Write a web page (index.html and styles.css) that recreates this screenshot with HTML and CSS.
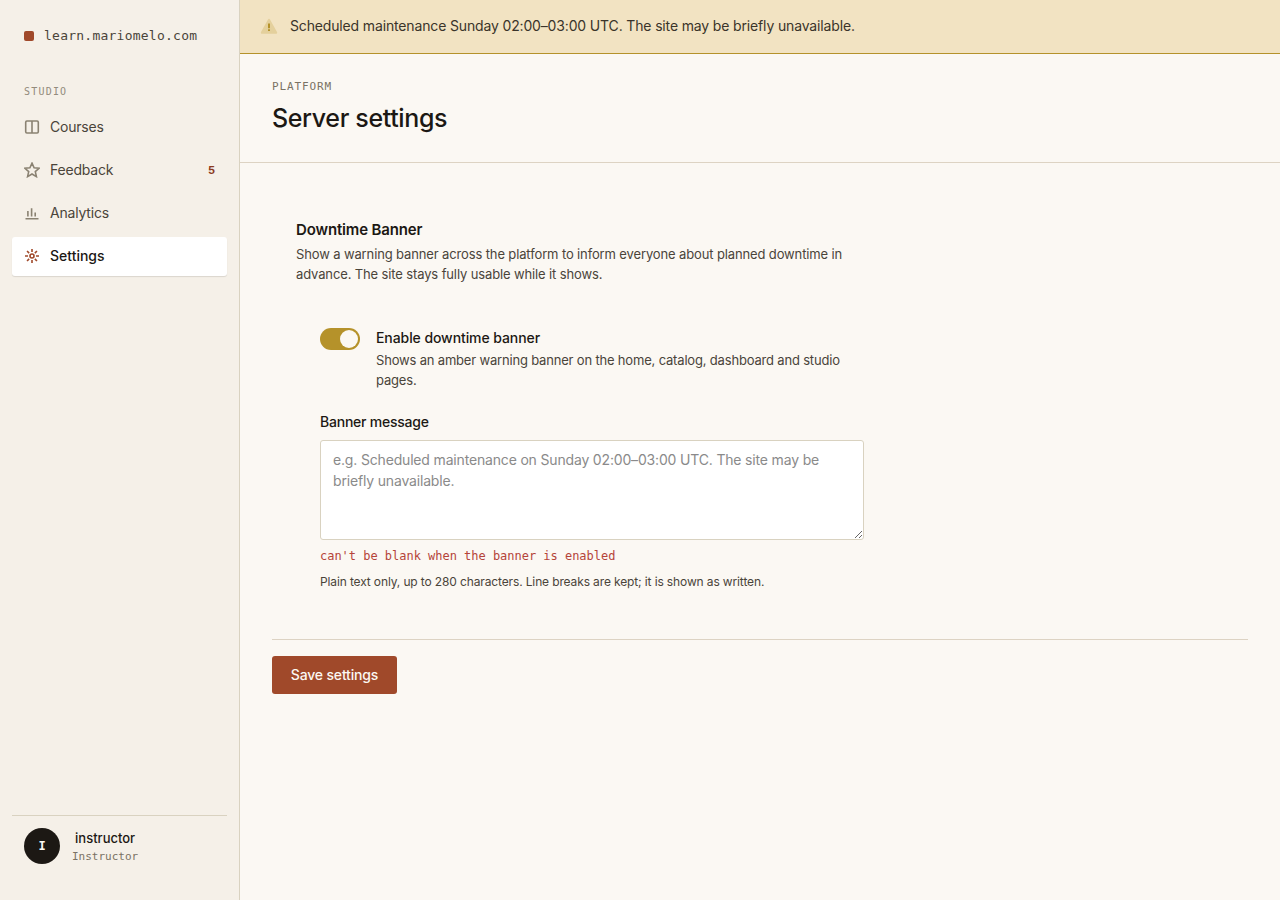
FILE: index.html
```
<!DOCTYPE html>
<html lang="en">
<head>
    <meta charset="UTF-8">
    <meta name="viewport" content="width=device-width, initial-scale=1.0">
    <title>Server settings</title>
    <link rel="stylesheet" href="styles.css">
</head>
<body>
    <div class="layout">
        <!-- Sidebar -->
        <aside class="sidebar">
            <a class="brand" href="#"><span class="brand-mark"></span><span class="brand-name">learn.mariomelo.com</span></a>

            <div class="nav-title">STUDIO</div>
            <nav class="nav">
                <a class="nav-item" href="#">
                    <svg class="icon" viewBox="0 0 16 16"><rect x="1.7" y="2" width="12.6" height="12" rx="1.2"/><path d="M8 2v12"/></svg>
                    <span class="nav-label">Courses</span>
                </a>
                <a class="nav-item" href="#">
                    <svg class="icon" viewBox="0 0 16 16"><path d="M8 1.2l2.1 4.6 5 .5-3.8 3.3 1.1 5L8 12l-4.4 2.6 1.1-5L.9 6.3l5-.5z"/></svg>
                    <span class="nav-label">Feedback</span>
                    <span class="count">5</span>
                </a>
                <a class="nav-item" href="#">
                    <svg class="icon" viewBox="0 0 16 16"><path d="M1.5 13.7h13M3.9 11.5V6M7.6 11.5V3.2M11.2 11.5V7.4"/></svg>
                    <span class="nav-label">Analytics</span>
                </a>
                <a class="nav-item active" href="#">
                    <svg class="icon" viewBox="0 0 16 16"><circle cx="8" cy="8" r="2"/><path d="M8 1v3M8 12v3M1 8h3M12 8h3M3.05 3.05l2.1 2.1M10.85 10.85l2.1 2.1M3.05 12.95l2.1-2.1M10.85 5.15l2.1-2.1"/></svg>
                    <span class="nav-label">Settings</span>
                </a>
            </nav>

            <div class="user">
                <div class="avatar">I</div>
                <div class="user-info">
                    <div class="user-name">instructor</div>
                    <div class="user-role">Instructor</div>
                </div>
            </div>
        </aside>

        <!-- Page -->
        <main class="main">
            <div class="banner">
                <svg class="banner-icon" viewBox="0 0 18 18"><path class="triangle" d="M8 1.6a1.2 1.2 0 0 1 2 0l7 12.4a1.1 1.1 0 0 1-1 1.7H2a1.1 1.1 0 0 1-1-1.7z"/><path class="mark" d="M8 5.4h2v4.8H8zM8 11.2h2V13H8z"/></svg>
                <span class="banner-text">Scheduled maintenance Sunday 02:00–03:00 UTC. The site may be briefly unavailable.</span>
            </div>

            <header class="page-header">
                <div class="eyebrow">PLATFORM</div>
                <h1>Server settings</h1>
            </header>

            <form class="form">
                <section class="section">
                    <h2>Downtime Banner</h2>
                    <p class="section-text">Show a warning banner across the platform to inform everyone about planned downtime in<br>advance. The site stays fully usable while it shows.</p>

                    <div class="fields">
                        <div class="toggle-row">
                            <span class="toggle"><span class="knob"></span></span>
                            <div>
                                <div class="toggle-label">Enable downtime banner</div>
                                <p class="toggle-text">Shows an amber warning banner on the home, catalog, dashboard and studio<br>pages.</p>
                            </div>
                        </div>

                        <label class="field-label" for="message">Banner message</label>
                        <textarea id="message" class="message" placeholder="e.g. Scheduled maintenance on Sunday 02:00–03:00 UTC. The site may be briefly unavailable."></textarea>
                        <p class="error">can't be blank when the banner is enabled</p>
                        <p class="hint">Plain text only, up to 280 characters. Line breaks are kept; it is shown as written.</p>
                    </div>
                </section>

                <div class="actions">
                    <button class="save" type="button">Save settings</button>
                </div>
            </form>
        </main>
    </div>
</body>
</html>
```
FILE: styles.css
```
* {
    box-sizing: border-box;
}

body {
    margin: 0;
    background-color: #fbf8f3;
    color: #1c1814;
    font-family: Inter, "Liberation Sans", sans-serif;
    font-size: 14px;
    line-height: 21px;
}

h1, h2, p {
    margin: 0;
}

a {
    color: inherit;
    text-decoration: none;
}

.layout {
    display: flex;
    min-height: 100vh;
}

/* Sidebar */
.sidebar {
    display: flex;
    flex-direction: column;
    width: 240px;
    padding: 24px 12px;
    background-color: #f5f0e8;
    border-right: 1px solid #d9d2c0;
}

.brand {
    display: flex;
    align-items: center;
    gap: 10px;
    height: 24px;
    padding: 0 12px;
}

.brand-mark {
    width: 10px;
    height: 10px;
    border-radius: 2px;
    background-color: #a0492a;
}

.brand-name,
.nav-title,
.eyebrow,
.user-role,
.avatar,
.error {
    font-family: "DejaVu Sans Mono", monospace;
}

.brand-name {
    padding-bottom: 2px;
    font-size: 13px;
    letter-spacing: 0.24px;
    color: #4a443a;
}

.nav-title {
    margin-top: 35px;
    padding: 0 12px;
    font-size: 10px;
    line-height: 17px;
    letter-spacing: 1.2px;
    color: #938b7c;
}

.nav {
    display: flex;
    flex-direction: column;
    gap: 4px;
    margin-top: 8px;
}

.nav-item {
    display: flex;
    align-items: center;
    gap: 10px;
    height: 39px;
    padding: 0 12px 1px;
    border-radius: 3px;
    color: #4a443a;
    letter-spacing: -0.2px;
}

.nav-item.active {
    background-color: #fff;
    color: #1c1814;
    font-weight: 500;
    letter-spacing: 0;
    box-shadow: 0 1px 1px rgba(28, 24, 20, 0.12);
}

.nav-label {
    padding-bottom: 2px;
}

.icon {
    width: 16px;
    height: 16px;
    fill: none;
    stroke: #8a8272;
    stroke-width: 1.6;
}

.active .icon {
    stroke: #a0492a;
}

.count {
    margin-left: auto;
    padding-top: 1px;
    font-size: 11px;
    font-weight: 700;
    letter-spacing: 0;
    color: #8a3a1e;
}

.user {
    display: flex;
    gap: 12px;
    margin-top: auto;
    padding: 12px 12px 11px;
    border-top: 1px solid #d9d2c0;
}

.avatar {
    width: 36px;
    height: 36px;
    border-radius: 50%;
    background-color: #1c1814;
    color: #fbf8f3;
    font-size: 12px;
    font-weight: 700;
    line-height: 36px;
    text-align: center;
}

.user-info {
    text-align: center;
}

.user-name {
    font-size: 13px;
    font-weight: 500;
    line-height: 20px;
}

.user-role {
    font-size: 11px;
    line-height: 17px;
    color: #7a7264;
}

/* Page */
.main {
    flex: 1;
}

.banner {
    display: flex;
    align-items: center;
    gap: 12px;
    height: 54px;
    padding: 0 20px;
    background-color: #f2e3c2;
    border-bottom: 1px solid #b5922a;
    color: #3a342a;
    letter-spacing: -0.15px;
}

.banner-icon {
    width: 18px;
    height: 18px;
}

.banner-text {
    padding-bottom: 2px;
}

.triangle {
    fill: #e4d09c;
}

.mark {
    fill: #b5922a;
}

.page-header {
    height: 109px;
    padding: 24px 32px 0;
    border-bottom: 1px solid #ddd3c3;
}

.eyebrow {
    font-size: 11px;
    line-height: 17px;
    letter-spacing: 0.88px;
    color: #7a7264;
}

h1 {
    margin-top: 7px;
    font-size: 25px;
    font-weight: 500;
    line-height: 32px;
    letter-spacing: -0.36px;
}

.form {
    padding: 32px;
}

.section {
    width: 640px;
    padding: 24px;
}

h2 {
    font-size: 15px;
    font-weight: 600;
    line-height: 22px;
    letter-spacing: -0.15px;
}

.section-text {
    margin-top: 3px;
    font-size: 13px;
    line-height: 20px;
    letter-spacing: -0.13px;
    color: #4a443a;
    white-space: nowrap;
}

.fields {
    padding: 44px 24px 0;
}

.toggle-row {
    display: flex;
    gap: 16px;
}

.toggle {
    flex: none;
    width: 40px;
    height: 22px;
    padding: 2px;
    border-radius: 11px;
    background-color: #b5922a;
}

.knob {
    display: block;
    width: 18px;
    height: 18px;
    margin-left: auto;
    border-radius: 50%;
    background-color: #fbf8f3;
}

.toggle-label {
    font-weight: 500;
    line-height: 20px;
    letter-spacing: -0.08px;
}

.toggle-text {
    margin-top: 2px;
    font-size: 13px;
    line-height: 20px;
    letter-spacing: -0.18px;
    color: #4a443a;
    white-space: nowrap;
}

.field-label {
    display: block;
    margin-top: 21px;
    font-weight: 500;
    letter-spacing: -0.23px;
}

.message {
    display: block;
    width: 544px;
    height: 100px;
    margin-top: 8px;
    padding: 8px 12px;
    border: 1px solid #d9d2c0;
    border-radius: 3px;
    background-color: #fff;
    font: inherit;
    letter-spacing: -0.17px;
    resize: vertical;
}

.message::placeholder {
    color: #8a8a8a;
}

.error {
    margin-top: 7px;
    font-size: 12px;
    line-height: 18px;
    letter-spacing: -0.02px;
    color: #b5443a;
}

.hint {
    margin-top: 8px;
    font-size: 12px;
    line-height: 18px;
    letter-spacing: -0.13px;
    color: #4a443a;
}

.actions {
    margin-top: 24px;
    padding-top: 16px;
    border-top: 1px solid #ddd3c3;
}

.save {
    width: 125px;
    height: 38px;
    padding: 0 0 1px;
    border: none;
    border-radius: 3px;
    background-color: #a0492a;
    color: #fbf8f3;
    font: 500 14px Inter, "Liberation Sans", sans-serif;
    letter-spacing: -0.16px;
}
```
